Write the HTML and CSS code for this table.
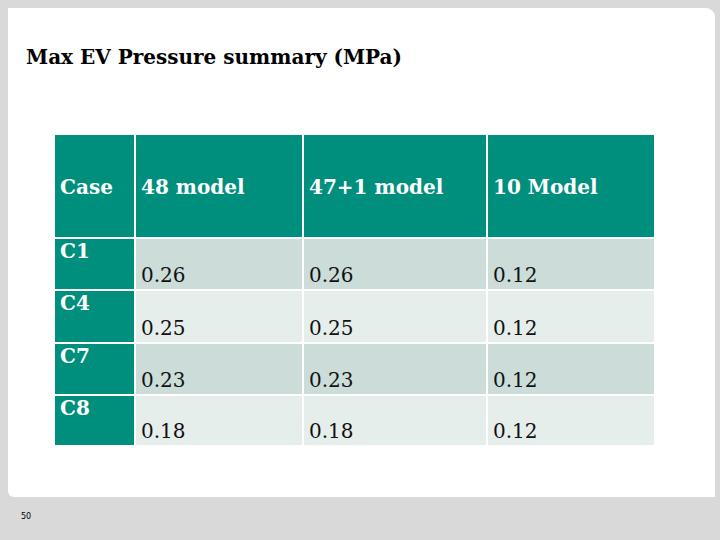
FILE: index.html
```html
<!DOCTYPE html>
<html>
<head>
<meta charset="utf-8">
<link rel="stylesheet" href="styles.css">
</head>
<body>
<div class="slide">
  <h1 class="title">Max EV Pressure summary (MPa)</h1>
  <div class="table">
    <div class="cell head">Case</div>
    <div class="cell head">48 model</div>
    <div class="cell head">47+1 model</div>
    <div class="cell head">10 Model</div>

    <div class="cell case">C1</div>
    <div class="cell odd">0.26</div>
    <div class="cell odd">0.26</div>
    <div class="cell odd">0.12</div>

    <div class="cell case">C4</div>
    <div class="cell even">0.25</div>
    <div class="cell even">0.25</div>
    <div class="cell even">0.12</div>

    <div class="cell case">C7</div>
    <div class="cell odd">0.23</div>
    <div class="cell odd">0.23</div>
    <div class="cell odd">0.12</div>

    <div class="cell case">C8</div>
    <div class="cell even">0.18</div>
    <div class="cell even">0.18</div>
    <div class="cell even">0.12</div>
  </div>
</div>
<div class="pagenum">50</div>
</body>
</html>
```

FILE: styles.css
```css
html, body {
  margin: 0;
  padding: 0;
}
body {
  width: 720px;
  height: 540px;
  background: #d9d9d9;
  font-family: "DejaVu Serif", "Liberation Serif", serif;
  overflow: hidden;
}
.slide {
  margin: 8px 0 0 8px;
  width: 707px;
  height: 489px;
  background: #ffffff;
  border-radius: 0 9px 0 6px;
  box-sizing: border-box;
  padding: 0 0 0 47px;
  display: flex;
  flex-direction: column;
}
.title {
  margin: 37px 0 0 -29px;
  font-size: 20px;
  font-weight: bold;
  line-height: 24px;
  color: #000;
}
.table {
  margin-top: 66px;
  display: grid;
  grid-template-columns: 79px 166px 182px 166px;
  grid-template-rows: 102px 50px 51px 50px 49px;
  column-gap: 2px;
  row-gap: 2px;
}
.cell {
  font-size: 20px;
  color: #111;
  box-sizing: border-box;
  padding-left: 5px;
}
.head {
  background: #008f7d;
  color: #ffffff;
  font-weight: bold;
  display: flex;
  align-items: center;
  padding-top: 2px;
}
.case {
  background: #008f7d;
  color: #ffffff;
  font-weight: bold;
  padding-top: 2px;
  line-height: 20px;
}
.odd, .even {
  display: flex;
  align-items: flex-end;
  padding-bottom: 3px;
  line-height: 22px;
}
.odd {
  background: #cbdcd9;
}
.even {
  background: #e6eeec;
}
.pagenum {
  margin: 15px 0 0 21px;
  font-family: "DejaVu Sans", sans-serif;
  font-size: 8px;
  color: #000;
}
```
